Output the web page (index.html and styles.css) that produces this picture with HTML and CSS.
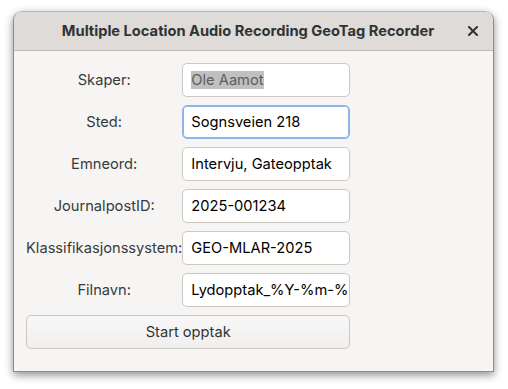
FILE: index.html
```html
<!DOCTYPE html>
<html lang="nb">
<head>
    <meta charset="UTF-8">
    <meta name="viewport" content="width=device-width, initial-scale=1.0">
    <title>Multiple Location Audio Recording GeoTag Recorder</title>
    <link rel="stylesheet" href="styles.css">
</head>
<body>
    <div class="window">
        <div class="titlebar">
            <span class="title">Multiple Location Audio Recording GeoTag Recorder</span>
            <span class="close">
                <svg width="10" height="10" viewBox="0 0 10 10">
                    <path d="M1 1 L9 9 M9 1 L1 9" stroke="#2e3436" stroke-width="2" stroke-linecap="square"/>
                </svg>
            </span>
        </div>
        <div class="content">
            <div class="form">
                <label>Skaper:</label>
                <div class="entry"><span class="selected">Ole Aamot</span></div>

                <label>Sted:</label>
                <div class="entry focused">Sognsveien 218</div>

                <label>Emneord:</label>
                <div class="entry">Intervju, Gateopptak</div>

                <label>JournalpostID:</label>
                <div class="entry">2025-001234</div>

                <label>Klassifikasjonssystem:</label>
                <div class="entry">GEO-MLAR-2025</div>

                <label>Filnavn:</label>
                <div class="entry">Lydopptak_%Y-%m-%d</div>

                <button class="start">Start opptak</button>
            </div>
        </div>
    </div>
</body>
</html>
```

FILE: styles.css
```css
html, body {
    height: 100%;
}
body {
    margin: 0;
    padding: 11px 0 0 13px;
    box-sizing: border-box;
    background-color: #ffffff;
    font-family: Inter, "Noto Sans", sans-serif;
    font-size: 14.67px;
    color: #2e3436;
}
.window {
    width: 479px;
    height: 359px;
    border: 1px solid #8e8b88;
    border-top-color: #b9b6b3;
    border-radius: 9px 9px 0 0;
    background-color: #f6f5f4;
    box-shadow: 0 3px 8px rgba(0,0,0,0.45);
    overflow: hidden;
}
.titlebar {
    height: 38px;
    background-color: #dedbd8;
    border-bottom: 1px solid #c0bcb8;
    display: flex;
    align-items: center;
    position: relative;
}
.title {
    flex: 1;
    text-align: center;
    font-weight: bold;
    padding-right: 11px;
    color: #2e3436;
}
.close {
    position: absolute;
    right: 15px;
    top: 14px;
    display: flex;
}
.content {
    padding: 12px;
}
.form {
    display: inline-grid;
    grid-template-columns: auto 168px;
    row-gap: 8px;
}
.form label {
    text-align: center;
    align-self: center;
    color: #363a3b;
}
.entry {
    height: 32px;
    border: 1px solid #cdc7c2;
    border-radius: 5px;
    background-color: #ffffff;
    color: #000000;
    padding: 0 8px;
    display: flex;
    align-items: center;
    white-space: nowrap;
    overflow: hidden;
}
.entry.focused {
    border-color: #8fb5e8;
    box-shadow: inset 0 0 0 1px #8fb5e8;
}
.selected {
    background-color: #c0c0c0;
    color: #5d5d5d;
}
.start {
    grid-column: 1 / 3;
    height: 34px;
    font-family: inherit;
    font-size: 14.67px;
    color: #2e3436;
    border: 1px solid #cdc7c2;
    border-radius: 5px;
    background: linear-gradient(#f8f7f7, #f1efee);
}
```
